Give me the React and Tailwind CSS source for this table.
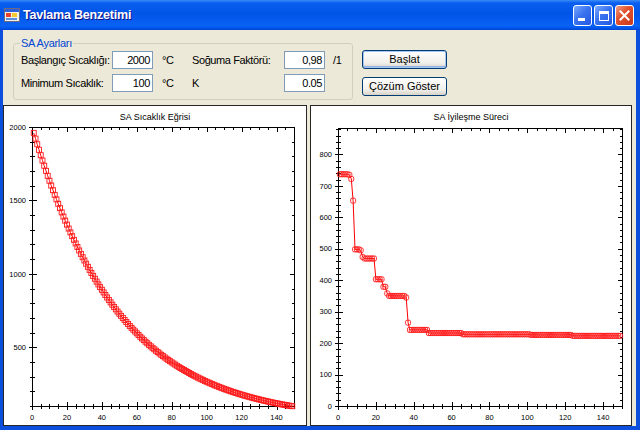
import React from 'react'

const FONT = "font-['Liberation_Sans',Arial,sans-serif]"

// best cost found so far: [from iteration, value]
const BEST_STEPS = [
  [1, 737], [6, 735], [7, 722], [8, 653], [9, 498], [12, 495], [13, 474], [14, 469],
  [20, 403], [24, 379], [26, 358], [27, 350], [36, 345], [37, 265], [38, 242],
  [48, 232], [66, 228], [102, 226], [124, 223],
]

const tempData = []
for (let k = 1; k <= 149; k++) tempData.push([k, 2000 * Math.pow(0.98, k)])

const bestData = []
for (let k = 1; k <= 149; k++) {
  let v = BEST_STEPS[0][1]
  for (const [from, val] of BEST_STEPS) if (k >= from) v = val
  bestData.push([k, v])
}

function range(from, to, step) {
  const out = []
  for (let v = from; v <= to + 1e-9; v += step) out.push(v)
  return out
}

function Chart({ w, h, title, box, xMax, yMin, yMax, yMajorFrom, yMajor, yMinor, data, rounded }) {
  const [x0, y0, x1, y1] = box
  const sx = (v) => x0 + (v / xMax) * (x1 - x0)
  const sy = (v) => y1 - ((v - yMin) / (yMax - yMin)) * (y1 - y0)
  const px = (v) => Math.round(v) + 0.5

  const xMinor = range(0, xMax, 5)
  const xMajorTicks = range(0, 140, 20)
  const yMinorTicks = range(Math.ceil(yMin / yMinor) * yMinor, yMax, yMinor)
  const yMajorTicks = range(yMajorFrom, yMax, yMajor)

  const line = data.map(([x, y]) => `${sx(x).toFixed(1)},${sy(y).toFixed(1)}`).join(' ')

  return (
    <svg width={w} height={h} className="block">
      <text x={w / 2} y={14} textAnchor="middle" fontSize="9" fontFamily="Liberation Sans, Arial, sans-serif" fill="#000">
        {title}
      </text>

      <g stroke="#000" strokeWidth="1" shapeRendering="crispEdges">
        <rect x={x0 + 0.5} y={y0 + 0.5} width={x1 - x0} height={y1 - y0} fill="none" />
        {xMinor.map((v) => (
          <g key={'xm' + v}>
            <line x1={px(sx(v))} x2={px(sx(v))} y1={y1 - 2} y2={y1 + 3} />
            <line x1={px(sx(v))} x2={px(sx(v))} y1={y0} y2={y0 + 3} />
          </g>
        ))}
        {xMajorTicks.map((v) => (
          <g key={'xM' + v}>
            <line x1={px(sx(v))} x2={px(sx(v))} y1={y1 - 4} y2={y1 + 4} />
            <line x1={px(sx(v))} x2={px(sx(v))} y1={y0} y2={y0 + 5} />
          </g>
        ))}
        {yMinorTicks.map((v) => (
          <g key={'ym' + v}>
            <line x1={x0 - 2} x2={x0 + 3} y1={px(sy(v))} y2={px(sy(v))} />
            <line x1={x1 - 2} x2={x1} y1={px(sy(v))} y2={px(sy(v))} />
          </g>
        ))}
        {yMajorTicks.map((v) => (
          <g key={'yM' + v}>
            <line x1={x0 - 3} x2={x0 + 5} y1={px(sy(v))} y2={px(sy(v))} />
            <line x1={x1 - 4} x2={x1} y1={px(sy(v))} y2={px(sy(v))} />
          </g>
        ))}
      </g>

      <g fontSize="7.5" fontFamily="Liberation Sans, Arial, sans-serif" fill="#000">
        {xMajorTicks.map((v) => (
          <text key={'xl' + v} x={sx(v)} y={y1 + 14} textAnchor="middle">{v}</text>
        ))}
        {yMajorTicks.map((v) => (
          <text key={'yl' + v} x={x0 - 6} y={sy(v) + 2.7} textAnchor="end">{v}</text>
        ))}
      </g>

      <polyline points={line} fill="none" stroke="#ff0000" strokeWidth="1" />
      <g fill="none" stroke="#ff1a1a" strokeWidth="0.9">
        {data.map(([x, y]) => (
          <rect key={x} x={sx(x) - 2.5} y={sy(y) - 2.5} width="5" height="5" rx={rounded ? 1.6 : 0} />
        ))}
      </g>
    </svg>
  )
}

function AppIcon() {
  return (
    <svg width="16" height="16" viewBox="0 0 16 16" className="shrink-0">
      <rect x="0.5" y="1.5" width="15" height="13" fill="#f4f1e6" stroke="#6a6a80" />
      <rect x="1" y="2" width="14" height="3" fill="#2f5fd8" />
      <rect x="2" y="6" width="5" height="4" fill="#e8412c" />
      <rect x="8" y="6" width="5" height="4" fill="#f5c92e" />
      <rect x="2" y="11" width="11" height="2" fill="#5b8fe0" />
    </svg>
  )
}

function TitleBar() {
  return (
    <div className="h-[30px] shrink-0 flex items-center pl-[4px] pr-[6px] bg-[linear-gradient(180deg,#3a8cf6_0%,#0a5ef0_10%,#0054e6_45%,#0a62f5_85%,#0058ee_93%,#0043cf_100%)]">
      <AppIcon />
      <span className="ml-[3px] flex-1 text-white font-bold text-[12.5px] tracking-[-0.2px] [text-shadow:1px_1px_#0f1089]">
        Tavlama Benzetimi
      </span>
      <div className="flex gap-[2px] mt-[1px]">
        <div className="w-[19px] h-[21px] rounded-[3px] border border-white bg-[linear-gradient(135deg,#7aa9ff_0%,#3a74f0_45%,#2458e0_100%)] flex items-end justify-start pl-[4px] pb-[4px]">
          <div className="w-[7px] h-[3px] bg-white" />
        </div>
        <div className="w-[19px] h-[21px] rounded-[3px] border border-white bg-[linear-gradient(135deg,#7aa9ff_0%,#3a74f0_45%,#2458e0_100%)] flex items-center justify-center">
          <div className="w-[10px] h-[10px] border border-white border-t-[3px]" />
        </div>
        <div className="w-[19px] h-[21px] rounded-[3px] border border-white bg-[linear-gradient(135deg,#f0a08a_0%,#e2542f_40%,#c8381a_100%)] flex items-center justify-center">
          <svg width="11" height="11" viewBox="0 0 11 11">
            <path d="M1.5 1.5 L9.5 9.5 M9.5 1.5 L1.5 9.5" stroke="#fff" strokeWidth="2" strokeLinecap="square" />
          </svg>
        </div>
      </div>
    </div>
  )
}

function Field({ value }) {
  return (
    <div className="w-[41px] h-[18px] border border-[#7f9db9] bg-white flex items-center justify-end pr-[2px] text-[11px]">
      {value}
    </div>
  )
}

export default function App() {
  return (
    <div className={`w-[640px] h-[430px] flex flex-col bg-[#0b4fdc] overflow-hidden ${FONT}`}>
      <TitleBar />

      <div className="flex-1 min-h-0 ml-[3px] mr-[4px] mb-[4px] bg-[#ece9d8] flex flex-col text-black">
        {/* ── Settings ────────────────── */}
        <div className="h-[75px] shrink-0 flex items-start pl-[10px]">
          <fieldset className="mt-[7px] w-[340px] border border-[#d0d0bf] rounded-[3px] pl-[7px] pb-[7px]">
            <legend className="text-[11px] leading-[12px] text-[#0046d5] px-[1px] -ml-[1px] tracking-[-0.3px]">SA Ayarları</legend>
            <div className="pt-[2px] flex flex-col gap-[5px] text-[11px] tracking-[-0.4px] whitespace-nowrap">
              <div className="flex items-center h-[18px]">
                <span className="w-[91px]">Başlangıç Sıcaklığı:</span>
                <Field value="2000" />
                <span className="w-[39px] pl-[9px]">°C</span>
                <span className="w-[92px]">Soğuma Faktörü:</span>
                <Field value="0,98" />
                <span className="pl-[8px]">/1</span>
              </div>
              <div className="flex items-center h-[18px]">
                <span className="w-[91px]">Minimum Sıcaklık:</span>
                <Field value="100" />
                <span className="w-[39px] pl-[9px]">°C</span>
                <span className="w-[92px]">K</span>
                <Field value="0.05" />
              </div>
            </div>
          </fieldset>

          <div className="ml-[9px] mt-[20px] flex flex-col gap-[8px] text-[11px]">
            <button className="w-[85px] h-[19px] rounded-[3px] border border-[#003c74] bg-[linear-gradient(180deg,#ffffff_0%,#f0efea_70%,#d8d3c8_100%)] shadow-[inset_0_0_0_1px_#a9c6f0,inset_0_-1px_0_1px_#8fb1e8] flex items-center justify-center">
              Başlat
            </button>
            <button className="w-[85px] h-[19px] rounded-[3px] border border-[#003c74] bg-[linear-gradient(180deg,#ffffff_0%,#f0efea_70%,#d8d3c8_100%)] flex items-center justify-center">
              Çözüm Göster
            </button>
          </div>
        </div>

        {/* ── Charts ────────────────── */}
        <div className="flex-1 min-h-0 flex gap-[3px]">
          <div className="w-[304px] h-full border border-[#262626] bg-white">
            <Chart
              w={302}
              h={319}
              title="SA Sıcaklık Eğrisi"
              box={[28, 21, 290, 300]}
              xMax={150}
              yMin={100}
              yMax={2000}
              yMajorFrom={500}
              yMajor={500}
              yMinor={100}
              data={tempData}
            />
          </div>
          <div className="w-[322px] h-full border border-[#262626] bg-white">
            <Chart
              w={320}
              h={319}
              title="SA İyileşme Süreci"
              box={[27, 22, 311, 300]}
              xMax={150}
              yMin={0}
              yMax={884}
              yMajorFrom={0}
              yMajor={100}
              yMinor={20}
              data={bestData}
              rounded
            />
          </div>
        </div>
      </div>
    </div>
  )
}
